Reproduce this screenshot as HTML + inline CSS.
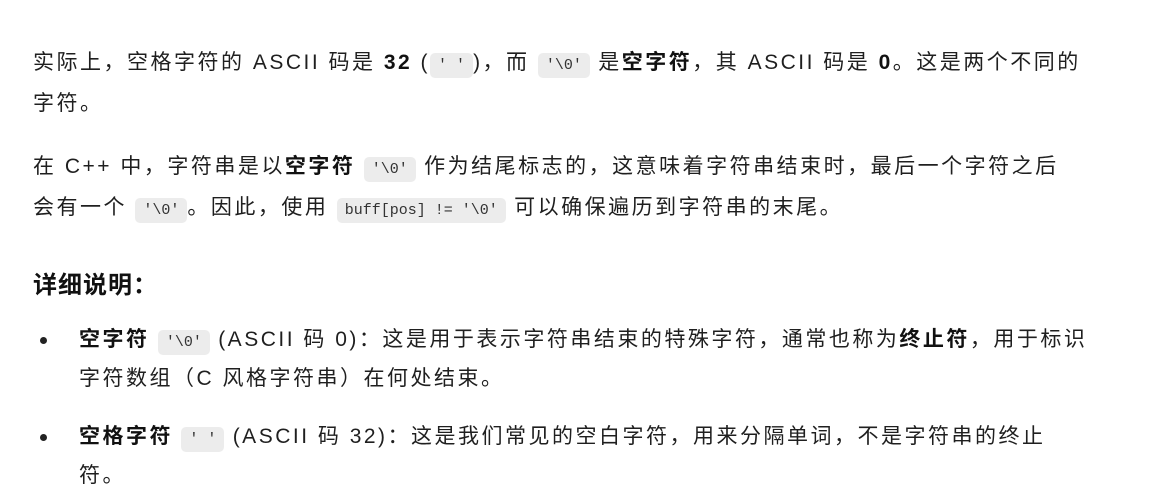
<!DOCTYPE html>
<html><head><meta charset="utf-8"><style>
body{margin:0;background:#fff;color:#1f1f1f;font-family:"Liberation Sans","Noto Sans CJK SC",sans-serif;font-size:21px;letter-spacing:2.5px;}
.w{position:absolute;left:33px;width:1115px;}
p{margin:0;line-height:38px;}
code{font-family:"Liberation Mono","DejaVu Sans Mono",monospace;font-size:15px;letter-spacing:0;background:#ececec;border-radius:5px;padding:4px 8px;color:#333;}
b{font-weight:bold;color:#111}
h3{margin:0;font-size:24px;line-height:38px;font-weight:bold;color:#111;letter-spacing:1px}
ul{margin:0;padding:0;list-style:none}
li{position:relative;padding-left:46px;line-height:36px;}
li:before{content:"";position:absolute;left:7px;top:15px;width:7px;height:7px;border-radius:50%;background:#222}
</style></head><body>
<div class="w" style="top:44px"><p>实际上，空格字符的 ASCII 码是 <b>32</b> (<code>' '</code>)，而 <code>'\0'</code> 是<b>空字符</b>，其 ASCII 码是 <b>0</b>。这是两个不同的<br>字符。</p></div>
<div class="w" style="top:148px"><p>在 C++ 中，字符串是以<b>空字符</b> <code>'\0'</code> 作为结尾标志的，这意味着字符串结束时，最后一个字符之后<br>会有一个 <code>'\0'</code>。因此，使用 <code>buff[pos] != '\0'</code> 可以确保遍历到字符串的末尾。</p></div>
<div class="w" style="top:267px"><h3>详细说明：</h3></div>
<div class="w" style="top:322px;width:1115px"><ul>
<li><b>空字符</b> <code>'\0'</code> (ASCII 码 0)：这是用于表示字符串结束的特殊字符，通常也称为<b>终止符</b>，用于标识<br>字符数组（C 风格字符串）在何处结束。</li>
</ul></div>
<div class="w" style="top:419px;width:1115px"><ul>
<li><b>空格字符</b> <code>' '</code> (ASCII 码 32)：这是我们常见的空白字符，用来分隔单词，不是字符串的终止<br>符。</li>
</ul></div>
</body></html>
